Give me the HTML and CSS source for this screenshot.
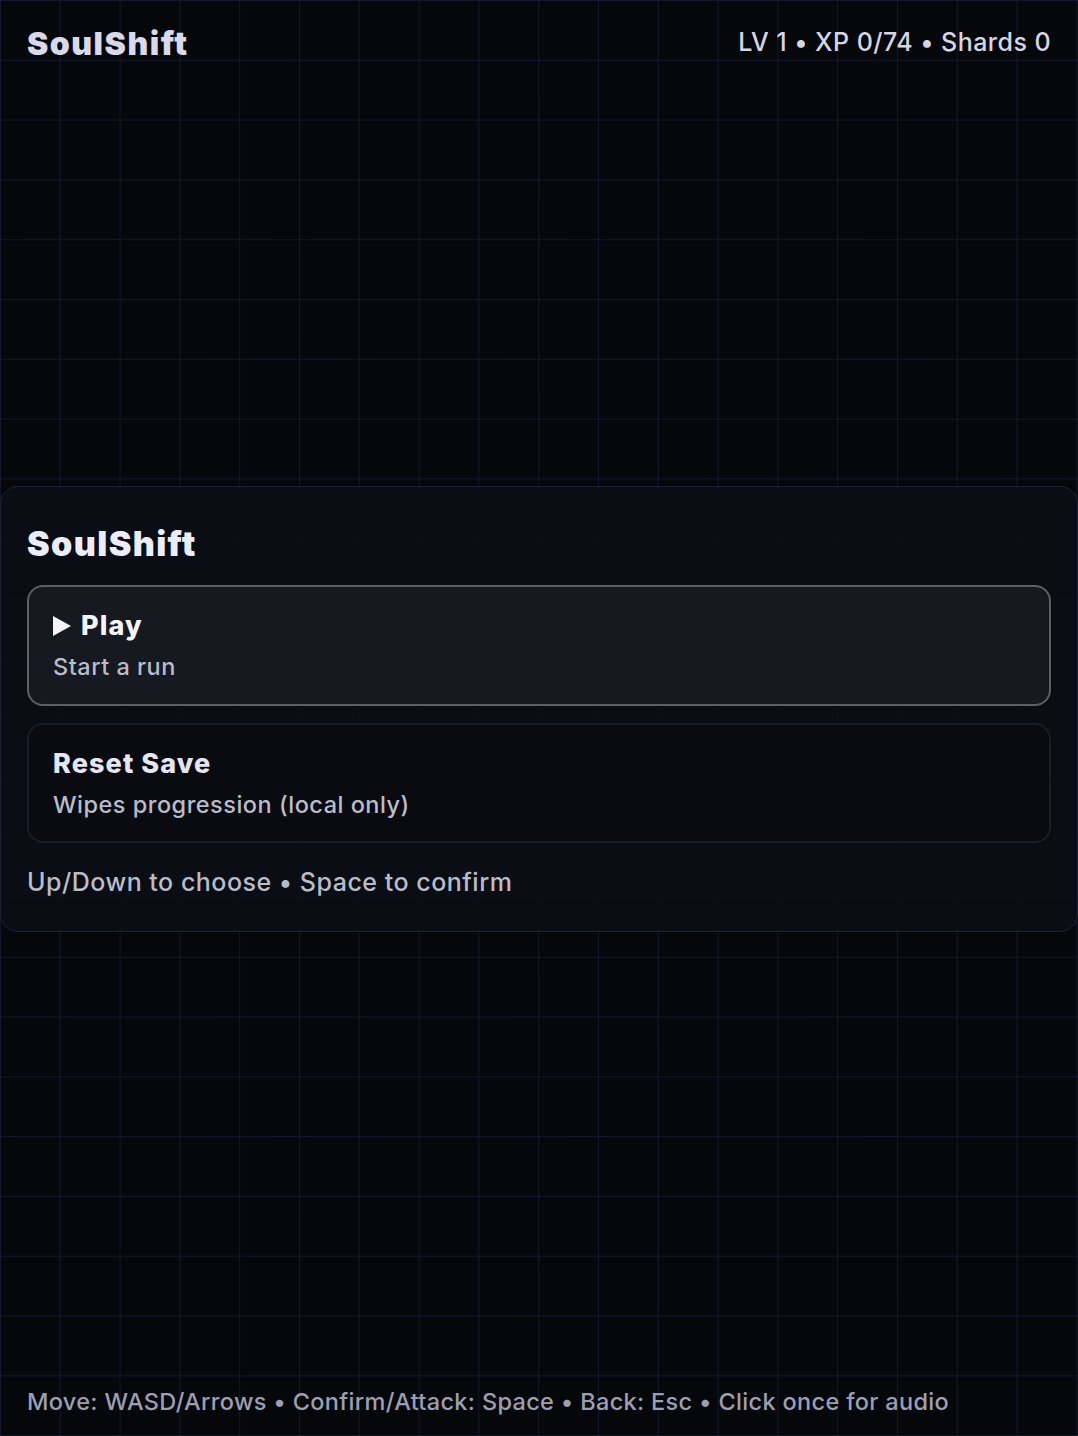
FILE: index.html
```html
<!DOCTYPE html>
<html lang="en">
<head>
<meta charset="utf-8">
<title>SoulShift</title>
<link rel="stylesheet" href="styles.css">
</head>
<body>
<div class="app">
  <header class="hud">
    <div class="brand">SoulShift</div>
    <div class="stats">LV 1 • XP 0/74 • Shards 0</div>
  </header>
  <main class="stage">
    <section class="panel">
      <h1 class="panel-title">SoulShift</h1>
      <div class="menu">
        <div class="option selected">
          <div class="option-label"><span class="play-icon"></span>Play</div>
          <div class="option-desc">Start a run</div>
        </div>
        <div class="option">
          <div class="option-label">Reset Save</div>
          <div class="option-desc">Wipes progression (local only)</div>
        </div>
      </div>
      <p class="hint">Up/Down to choose • Space to confirm</p>
    </section>
  </main>
  <footer class="controls">Move: WASD/Arrows • Confirm/Attack: Space • Back: Esc • Click once for audio</footer>
</div>
</body>
</html>
```
FILE: styles.css
```css
* { box-sizing: border-box; }
html, body { margin: 0; padding: 0; }
body {
  background-color: #06070b;
  background-image:
    linear-gradient(to right, rgba(42, 42, 96, 0.4) 1px, transparent 1px),
    linear-gradient(to bottom, rgba(42, 42, 96, 0.4) 1px, transparent 1px);
  background-size: 59.8px 59.8px;
  background-position: 0 0;
  font-family: Inter, "Noto Sans", sans-serif;
  color: #dcdcec;
}
.app {
  min-height: 100vh;
  display: flex;
  flex-direction: column;
}
.hud {
  display: flex;
  justify-content: space-between;
  align-items: center;
  padding: 24px 27px 0 27px;
}
.brand {
  font-weight: 900;
  font-size: 32px;
  letter-spacing: 1.5px;
  color: #d9d9ea;
}
.stats {
  font-size: 25px;
  font-weight: 500;
  letter-spacing: 0.45px;
  color: #d5d6e4;
  margin-top: -3px;
}
.stage {
  flex: 1;
  display: flex;
  flex-direction: column;
  justify-content: center;
  padding-bottom: 32px;
}
.panel {
  border: 1px solid #1f2136;
  border-radius: 18px;
  background: rgba(12, 14, 21, 0.85);
  padding: 37px 26px 34px 26px;
}
.panel-title {
  margin: 0 0 21px 0;
  font-size: 34px;
  font-weight: 900;
  letter-spacing: 1.4px;
  color: #ececfa;
  line-height: 1.2;
}
.menu {
  display: flex;
  flex-direction: column;
  gap: 17px;
}
.option {
  border: 2px solid #1a1c2b;
  border-radius: 16px;
  padding: 22px 24px 22px 24px;
  background: rgba(8, 10, 15, 0.6);
}
.option.selected {
  border-color: #5c5e68;
  background: #171920;
  padding-bottom: 23px;
}
.option-label {
  display: flex;
  align-items: center;
  font-size: 27px;
  font-weight: 800;
  letter-spacing: 1.1px;
  color: #e6e6f2;
}
.option.selected .option-label { color: #f4f4fa; }
.play-icon {
  width: 0;
  height: 0;
  border-top: 10px solid transparent;
  border-bottom: 10px solid transparent;
  border-left: 18px solid #f4f4fa;
  margin-right: 10px;
}
.option-desc {
  margin-top: 10px;
  font-size: 23.5px;
  font-weight: 500;
  letter-spacing: 0.5px;
  color: #b9bccb;
}
.hint {
  margin: 24px 0 0 0;
  font-size: 25px;
  font-weight: 500;
  letter-spacing: 0.5px;
  color: #b9bccb;
}
.controls {
  padding: 0 27px 20px 27px;
  font-size: 23.5px;
  font-weight: 500;
  letter-spacing: 0.33px;
  color: #9c9fb2;
}
```
